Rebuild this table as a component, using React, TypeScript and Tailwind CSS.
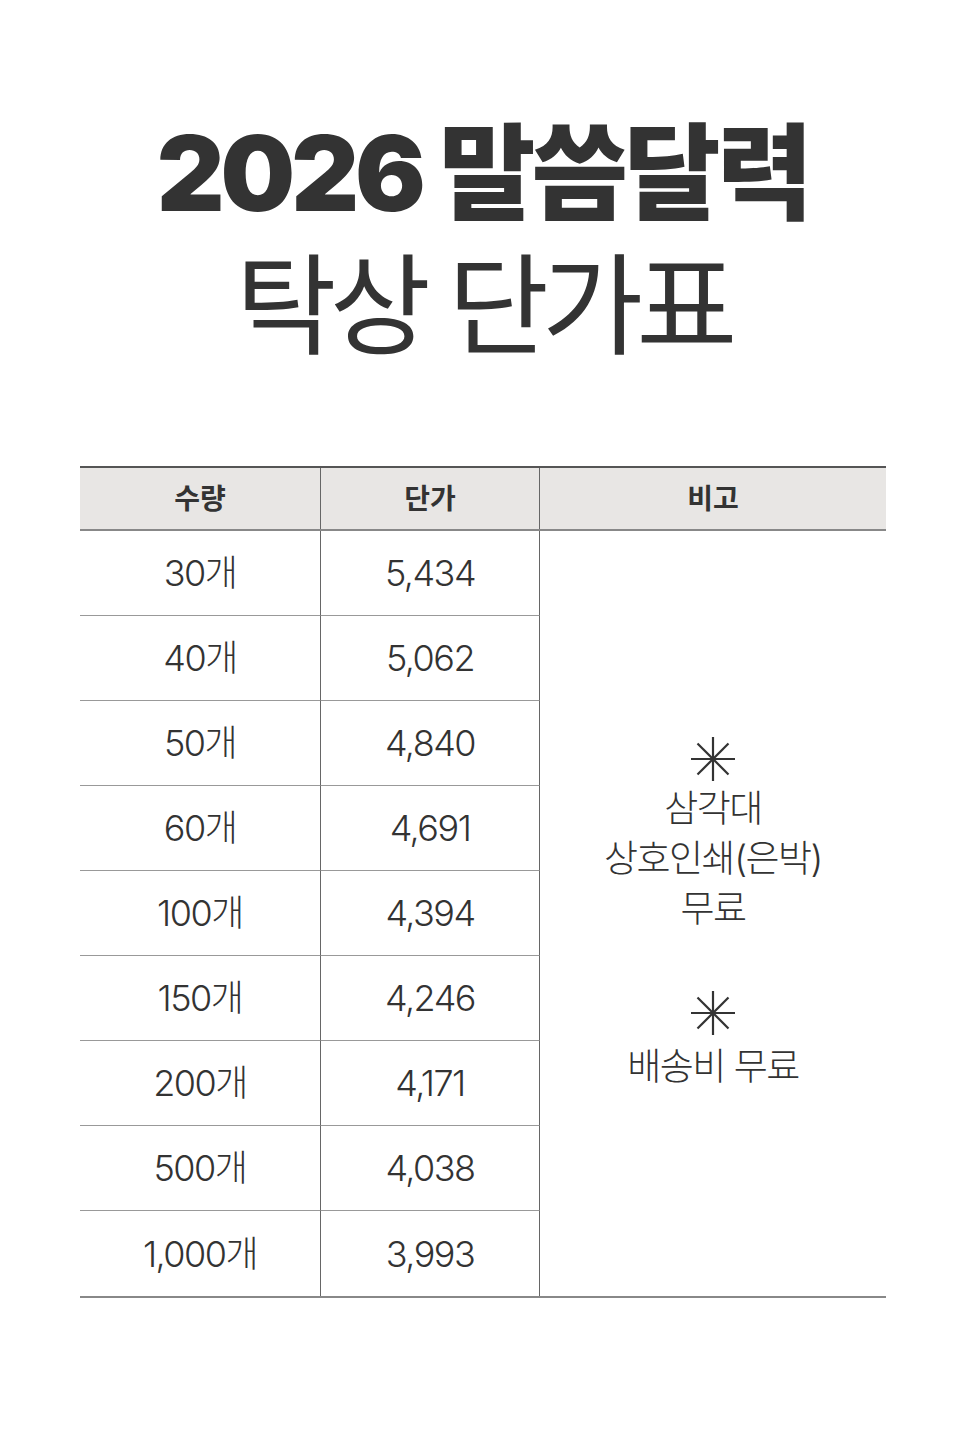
import React from "react";

const rows = [
  ["30개", "5,434"],
  ["40개", "5,062"],
  ["50개", "4,840"],
  ["60개", "4,691"],
  ["100개", "4,394"],
  ["150개", "4,246"],
  ["200개", "4,171"],
  ["500개", "4,038"],
  ["1,000개", "3,993"],
];

function Star() {
  return (
    <svg width="46" height="46" viewBox="0 0 46 46" className="mx-auto">
      <g stroke="#333" strokeWidth="2.2" strokeLinecap="butt">
        <line x1="23" y1="1" x2="23" y2="45" />
        <line x1="1" y1="23" x2="45" y2="23" />
        <line x1="7.5" y1="7.5" x2="38.5" y2="38.5" />
        <line x1="38.5" y1="7.5" x2="7.5" y2="38.5" />
      </g>
    </svg>
  );
}

export default function App() {
  return (
    <div
      className="w-[966px] h-[1449px] bg-white text-[#333] flex flex-col items-center"
      style={{ fontFamily: 'Inter, "Noto Sans CJK KR", "Noto Sans", sans-serif' }}
    >
      {/* Title */}
      <div className="pt-[106px] flex flex-col items-center">
        <h1 className="text-[105px] font-black leading-[134px] tracking-[-4px]">2026 말씀달력</h1>
        <h2 className="text-[110px] font-normal leading-[132px] tracking-[-7px]">탁상 단가표</h2>
      </div>

      {/* Table */}
      <div className="mt-[94px] w-[806px]">
        <div className="grid grid-cols-[241px_219px_346px] h-[65px] bg-[#e8e6e4] border-t-2 border-[#555] border-b-2 border-b-[#888] text-[28px] font-bold">
          <div className="flex items-center justify-center border-r border-[#666]">수량</div>
          <div className="flex items-center justify-center border-r border-[#666]">단가</div>
          <div className="flex items-center justify-center">비고</div>
        </div>

        <div className="grid grid-cols-[241px_219px_346px] border-b-2 border-[#888] text-[36px] font-light tracking-[-1.5px]">
          {rows.map(([qty, price], i) => (
            <React.Fragment key={qty}>
              <div
                className={`h-[85px] col-start-1 flex items-center justify-center border-r border-[#666] ${
                  i < rows.length - 1 ? "border-b border-b-[#999]" : ""
                }`}
                style={{ gridRow: i + 1 }}
              >
                {qty}
              </div>
              <div
                className={`h-[85px] col-start-2 flex items-center justify-center border-r border-[#666] ${
                  i < rows.length - 1 ? "border-b border-b-[#999]" : ""
                }`}
                style={{ gridRow: i + 1 }}
              >
                {price}
              </div>
            </React.Fragment>
          ))}
          <div className="col-start-3 row-start-1 row-span-9 flex flex-col items-center justify-center text-[37px] leading-[50px] text-center">
            <Star />
            <div className="mt-[2px]">삼각대</div>
            <div>상호인쇄(은박)</div>
            <div>무료</div>
            <div className="h-[56px]" />
            <Star />
            <div className="mt-[6px]">배송비 무료</div>
          </div>
        </div>
      </div>
    </div>
  );
}
